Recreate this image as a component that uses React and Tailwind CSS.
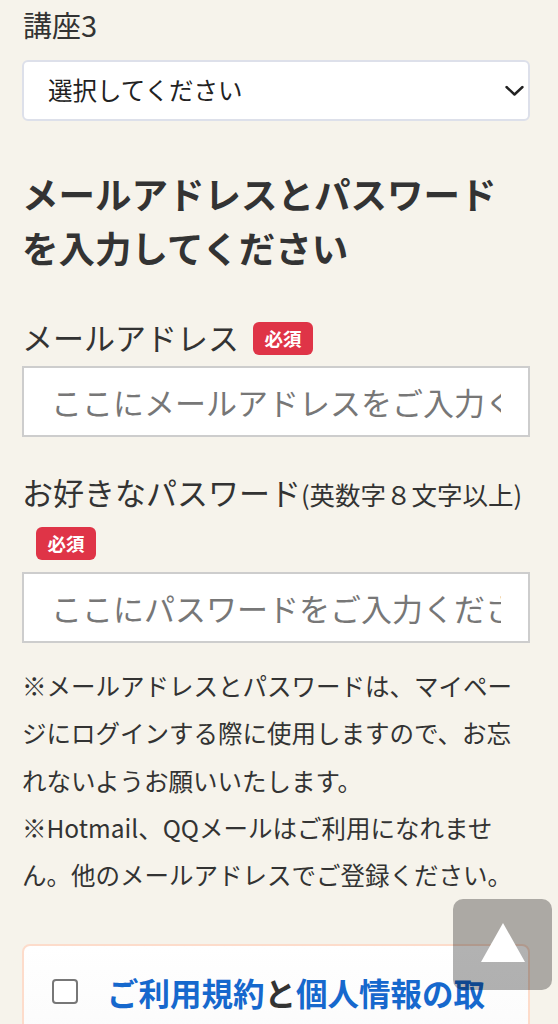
export default function App() {
  return (
    <div className="relative h-[1024px] overflow-hidden bg-[#f6f3eb] text-[#333] font-['Noto_Sans_CJK_JP','Noto_Sans',sans-serif]">
      <div className="pl-[22px] pr-[28px] pt-[4px]">
        {/* 講座3 */}
        <p className="pl-px text-[29px] leading-[40px]">講座3</p>
        <div className="relative mt-[16px] h-[61px]">
          <select className="h-full w-full appearance-none rounded-[6px] border-2 border-[#dde0ea] bg-white pl-[24px] text-[24.5px] text-[#222] outline-none">
            <option>選択してください</option>
          </select>
          <svg
            className="pointer-events-none absolute right-[6px] top-1/2 -translate-y-1/2"
            width="19"
            height="11"
            viewBox="0 0 19 11"
          >
            <path d="M1.5 1.5 9.5 9l8-7.5" fill="none" stroke="#222" strokeWidth="2.4" strokeLinecap="round" strokeLinejoin="round" />
          </svg>
        </div>

        {/* heading */}
        <h2 className="mt-[46px] text-[36.5px] font-bold leading-[54px]">
          メールアドレスとパスワード
          <br />
          を入力してください
        </h2>

        {/* email */}
        <p className="mt-[36px] text-[31px] leading-[52px]">
          メールアドレス
          <span className="ml-[14px] inline-flex h-[33px] w-[60px] translate-y-[-3px] items-center justify-center rounded-[6px] bg-[#df3447] align-middle text-[18.5px] font-bold leading-none text-white">
            必須
          </span>
        </p>
        <input
          type="email"
          placeholder="ここにメールアドレスをご入力ください"
          className="mt-[3px] block h-[71px] w-full border-2 border-[#cdcdcd] bg-white px-[27px] text-[31px] outline-none placeholder:text-[#777]"
        />

        {/* password */}
        <p className="mt-[29px] text-[31px] leading-[52px]">
          お好きなパスワード
          <span className="text-[25.5px]">(英数字８文字以上)</span>
          <span className="ml-[14px] inline-flex h-[33px] w-[60px] translate-y-[-7px] items-center justify-center rounded-[6px] bg-[#df3447] align-middle text-[18.5px] font-bold leading-none text-white">
            必須
          </span>
        </p>
        <input
          type="password"
          placeholder="ここにパスワードをご入力ください"
          className="mt-[0px] block h-[71px] w-full border-2 border-[#cdcdcd] bg-white px-[27px] text-[31px] outline-none placeholder:text-[#777]"
        />

        {/* notes */}
        <div className="mt-[19px] text-[24.5px] leading-[47.25px]">
          <p>※メールアドレスとパスワードは、マイページにログインする際に使用しますので、お忘れないようお願いいたします。</p>
          <p>※Hotmail、QQメールはご利用になれません。他のメールアドレスでご登録ください。</p>
        </div>

        {/* agreement card */}
        <div className="mt-[46px] flex items-start rounded-[8px] border-2 border-[#fddccb] bg-gradient-to-b from-white to-[#f9f9f9] pb-[24px] pl-[28px] pr-[28px] pt-[23px]">
          <span className="mt-[10px] h-[25px] w-[26px] shrink-0 rounded-[4px] border-2 border-[#777] bg-white" />
          <p className="ml-[29px] text-[31.5px] font-bold leading-[46px]">
            <span className="text-[#1668cd]">ご利用規約</span>と<span className="text-[#1668cd]">個人情報の取</span>
            <br />
            <span className="text-[#1668cd]">り扱い</span>に同意する
          </p>
        </div>
      </div>

      {/* page top button */}
      <button className="absolute bottom-[34px] right-[6px] flex h-[91px] w-[99px] items-center justify-center rounded-[10px] bg-black/30">
        <svg width="44" height="39" viewBox="0 0 44 39" className="-translate-y-[2px]">
          <polygon points="22,0 44,39 0,39" fill="#fff" />
        </svg>
      </button>
    </div>
  );
}
